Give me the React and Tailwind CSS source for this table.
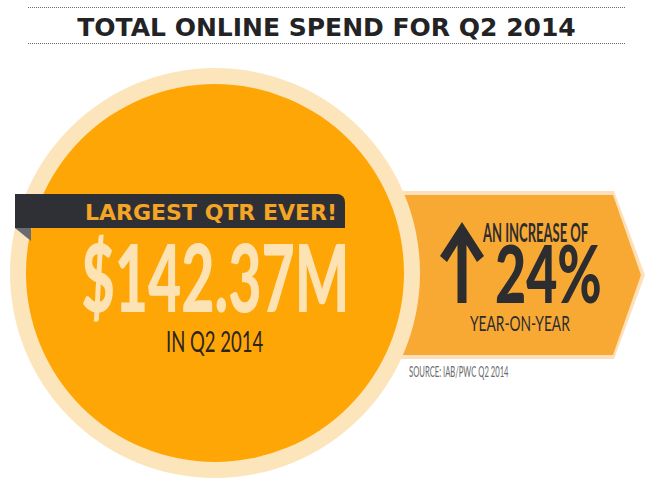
import React from "react";

function ArrowUp() {
  return (
    <svg width="44" height="81" viewBox="0 0 44 81" className="block shrink-0">
      <polygon
        points="22,0 44,34 37,40 26.5,23 26.5,81 17.5,81 17.5,23 7,40 0,34"
        fill="#2d2d30"
      />
    </svg>
  );
}

export default function App() {
  return (
    <div className="w-[660px] h-[492px] bg-white overflow-hidden font-['Lato',sans-serif]">
      {/* Header */}
      <div className="ml-[28px] mt-[7px] w-[597px] border-y border-dotted border-[#6b6b6b] pt-[7px] pb-[3px] flex justify-center">
        <h1 className="font-['DejaVu_Sans',sans-serif] font-bold text-[25px] leading-none text-[#232325] whitespace-nowrap">
          TOTAL ONLINE SPEND FOR Q2 2014
        </h1>
      </div>

      {/* Body */}
      <div className="flex items-start mt-[24px] ml-[10px]">
        {/* Circle */}
        <div className="relative z-10 shrink-0 w-[410px] h-[410px] rounded-full bg-[#fde5bb] p-[16px]">
          <div className="w-full h-full rounded-full bg-[#fea605] flex flex-col items-center pt-[110px]">
            <div className="relative self-start ml-[-11px] w-[330px] h-[34px] bg-[#2f3035] rounded-tr-[8px] flex justify-end items-start pt-[8px] pr-[8px]">
              <span className="font-['DejaVu_Sans',sans-serif] font-bold text-[22px] leading-none text-[#f5a524] whitespace-nowrap">
                LARGEST QTR EVER!
              </span>
              <div className="absolute left-0 top-full w-[16px] h-[13px] bg-[#6a6b71] [clip-path:polygon(0_0,100%_0,100%_100%)]" />
            </div>
            <span className="mt-[1px] inline-block origin-center scale-x-[0.61] whitespace-nowrap font-black text-[94px] leading-none text-[#fde2b3]">
              $142.37M
            </span>
            <span className="mt-[4px] inline-block origin-center scale-x-[0.66] whitespace-nowrap text-[28px] leading-none text-[#2a2421]">
              IN Q2 2014
            </span>
          </div>
        </div>

        {/* Arrow column */}
        <div className="ml-[-40px] mt-[123px] flex flex-col">
          <div className="w-[265px] h-[168px] bg-[#fde0b9] p-[4px] [clip-path:polygon(0_0,234px_0,100%_50%,234px_100%,0_100%)]">
            <div className="w-full h-full bg-[#f8a933] [clip-path:polygon(0_0,229px_0,100%_50%,229px_100%,0_100%)] flex flex-col pl-[56px] pt-[27px]">
              <div className="flex items-start">
                <ArrowUp />
                <div className="ml-[-1px] flex flex-col items-start">
                  <span className="mt-[-3px] inline-block origin-left scale-x-[0.5] whitespace-nowrap font-bold text-[26px] leading-none text-[#2d2d30]">
                    AN INCREASE OF
                  </span>
                  <span className="mt-[-13px] ml-[12px] inline-block origin-left scale-x-[0.672] whitespace-nowrap font-black text-[80px] leading-none text-[#2d2d30]">
                    24%
                  </span>
                </div>
              </div>
              <span className="ml-[30px] inline-block self-start origin-left scale-x-[0.655] whitespace-nowrap text-[21px] leading-none text-[#2d2d30]">
                YEAR-ON-YEAR
              </span>
            </div>
          </div>
          <span className="mt-[5px] ml-[29px] inline-block self-start origin-left scale-x-[0.51] whitespace-nowrap text-[15px] leading-none text-[#6a6a6a]">
            SOURCE: IAB/PWC Q2 2014
          </span>
        </div>
      </div>
    </div>
  );
}
